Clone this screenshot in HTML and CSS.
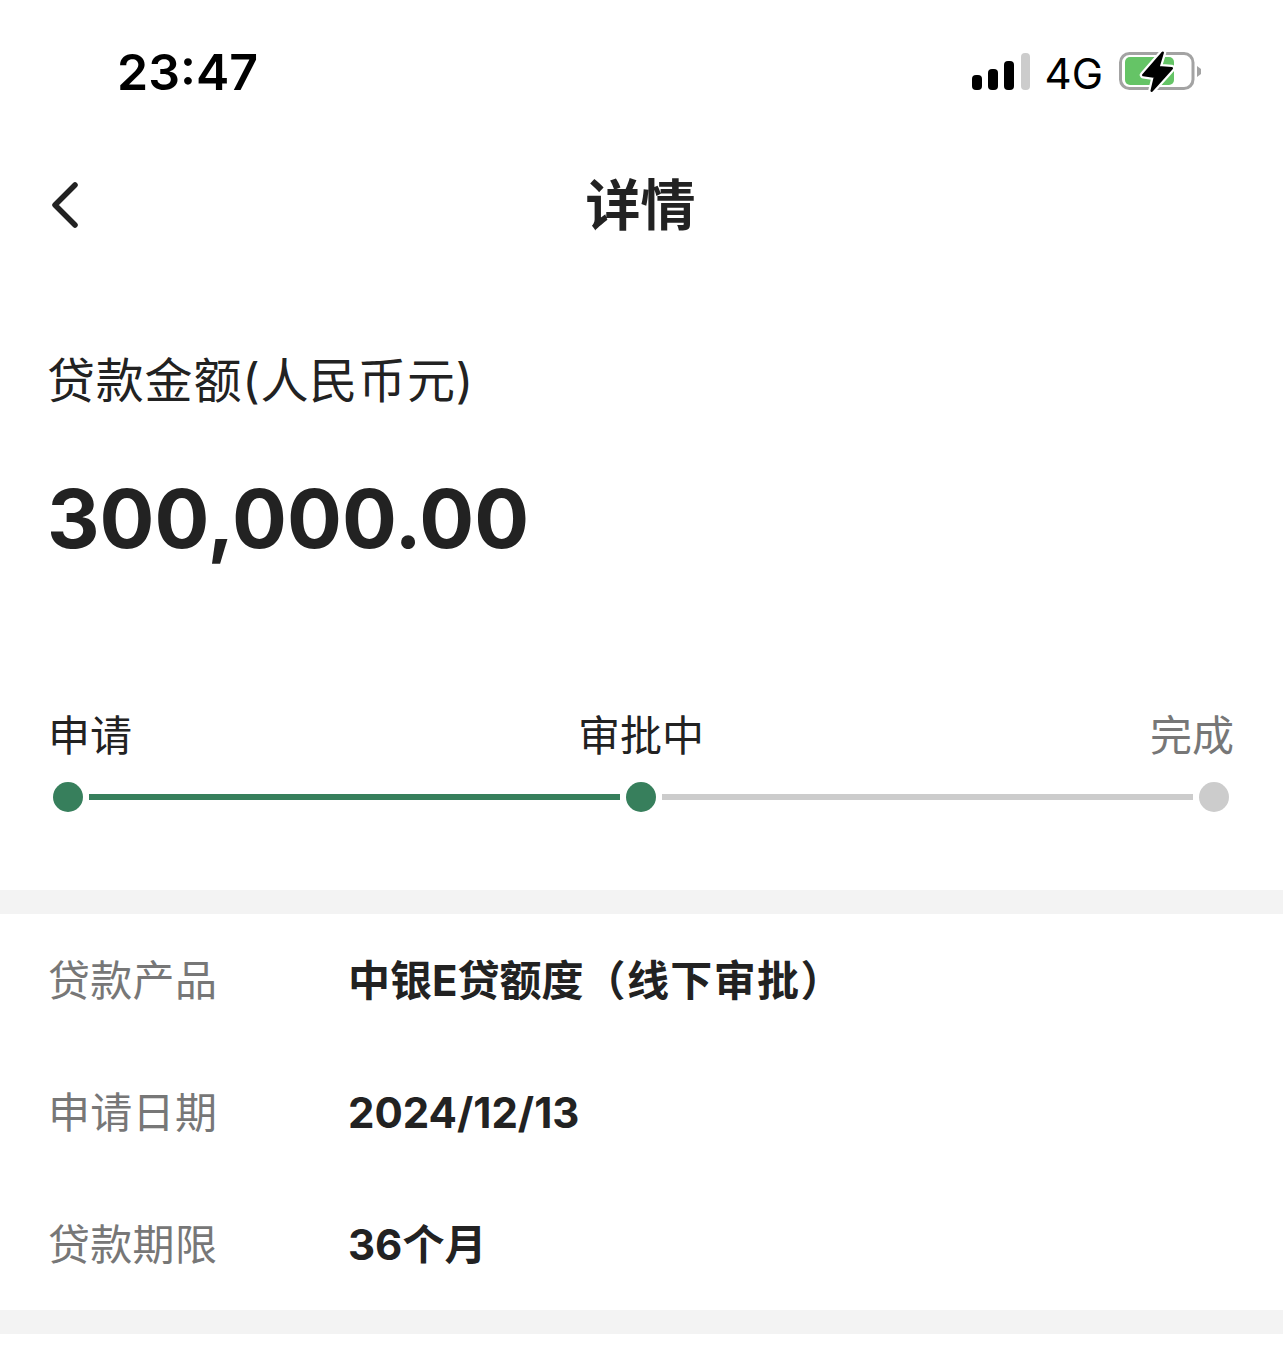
FILE: index.html
```html
<!DOCTYPE html>
<html lang="zh-CN">
<head>
    <meta charset="UTF-8">
    <meta name="viewport" content="width=device-width, initial-scale=1.0">
    <title>详情</title>
    <link rel="stylesheet" href="styles.css">
</head>
<body>
    <div class="status-bar">
        <span class="status-time">23:47</span>
        <div class="status-icons">
            <svg class="signal" width="58" height="38" viewBox="0 0 58 38">
                <rect x="0" y="23" width="10" height="15" rx="4" fill="#000"/>
                <rect x="16" y="17" width="10" height="21" rx="4" fill="#000"/>
                <rect x="32" y="9" width="10" height="29" rx="4" fill="#000"/>
                <rect x="49" y="1" width="9" height="37" rx="4" fill="#ccc"/>
            </svg>
            <span class="status-net">4G</span>
            <svg class="battery" width="84" height="42" viewBox="0 0 84 42">
                <rect x="2.5" y="3.5" width="72.5" height="35" rx="9" fill="none" stroke="#a3a3a3" stroke-width="3"/>
                <rect x="7" y="7" width="49" height="28" rx="5" fill="#65c466"/>
                <path d="M79 16 L83 19 L83 24 L79 27 Z" fill="#a3a3a3"/>
                <path d="M44.7 2.7 L25.3 25 L37 26.7 L33.7 40.7 L53.7 18.3 L40.3 17.3 Z" fill="#fff" stroke="#fff" stroke-width="7" stroke-linejoin="round"/>
                <path d="M44.7 2.7 L25.3 25 L37 26.7 L33.7 40.7 L53.7 18.3 L40.3 17.3 Z" fill="#000" stroke="#000" stroke-width="2.5" stroke-linejoin="round"/>
            </svg>
        </div>
    </div>

    <div class="nav-bar">
        <svg class="back-icon" width="28" height="46" viewBox="0 0 28 46">
            <path d="M24 3 L4 23 L24 43" fill="none" stroke="#222" stroke-width="5.5" stroke-linecap="round" stroke-linejoin="round"/>
        </svg>
        <h1 class="nav-title">详情</h1>
    </div>

    <div class="amount-section">
        <div class="amount-label">贷款金额(人民币元)</div>
        <div class="amount-value">300,000.00</div>
    </div>

    <div class="progress-section">
        <div class="progress-labels">
            <span>申请</span>
            <span>审批中</span>
            <span class="pending">完成</span>
        </div>
        <div class="progress-track">
            <span class="dot done"></span>
            <span class="line done"></span>
            <span class="dot done"></span>
            <span class="line"></span>
            <span class="dot"></span>
        </div>
    </div>

    <div class="divider"></div>

    <div class="detail-list">
        <div class="detail-row">
            <span class="detail-label">贷款产品</span>
            <span class="detail-value">中银E贷额度<span class="wide">（线下审批）</span></span>
        </div>
        <div class="detail-row">
            <span class="detail-label">申请日期</span>
            <span class="detail-value">2024/12/13</span>
        </div>
        <div class="detail-row">
            <span class="detail-label">贷款期限</span>
            <span class="detail-value">36个月</span>
        </div>
    </div>

    <div class="divider"></div>
</body>
</html>
```

FILE: styles.css
```css
* {
    margin: 0;
    padding: 0;
    box-sizing: border-box;
}

body {
    font-family: Inter, "Noto Sans CJK SC", sans-serif;
    background: #fff;
    color: #222;
    width: 1283px;
    height: 1346px;
    overflow: hidden;
}

.status-bar {
    height: 130px;
    padding: 13px 81px 0 117px;
    display: flex;
    align-items: center;
    justify-content: space-between;
}

.status-time {
    font-size: 50px;
    font-weight: 600;
    color: #000;
}

.status-icons {
    display: flex;
    align-items: center;
}

.signal {
    margin-right: 15px;
    margin-bottom: 2px;
}

.battery {
    margin-bottom: 2px;
}

.status-net {
    font-size: 42px;
    color: #000;
    margin-right: 15px;
    padding-top: 4px;
}

.nav-bar {
    height: 150px;
    padding: 0 2px 8px 0;
    position: relative;
    display: flex;
    align-items: center;
    justify-content: center;
}

.back-icon {
    position: absolute;
    left: 51px;
    top: 52px;
}

.nav-title {
    font-size: 55px;
    font-weight: 700;
}

.amount-section {
    padding: 71px 47px 0;
}

.amount-label {
    font-size: 48px;
    line-height: 60px;
    letter-spacing: 0.8px;
}

.amount-value {
    font-size: 81.5px;
    font-weight: 700;
    line-height: 100px;
    margin-top: 58px;
}

.progress-section {
    margin-top: 139px;
    padding: 0 49px 0 48px;
}

.progress-labels {
    display: flex;
    justify-content: space-between;
    font-size: 42px;
    line-height: 56px;
}

.pending {
    color: #777;
}

.progress-track {
    margin-top: 18px;
    padding: 0 5px;
    display: flex;
    align-items: center;
    gap: 6px;
}

.dot {
    flex: none;
    width: 30px;
    height: 30px;
    border-radius: 50%;
    background: #ccc;
}

.dot.done {
    background: #377f5c;
}

.line {
    flex: 1;
    height: 6px;
    background: #ccc;
}

.line.done {
    background: #377f5c;
}

.divider {
    height: 24px;
    background: #f3f3f3;
}

.progress-section + .divider {
    margin-top: 78px;
}

.detail-list {
    padding: 0 47px;
}

.detail-row {
    height: 132px;
    display: flex;
    align-items: center;
    font-size: 42px;
}

.detail-label {
    width: 300px;
    padding: 0 0 6px 1px;
    letter-spacing: 0.3px;
    color: #777;
}

.detail-value {
    font-weight: 700;
    line-height: 60px;
    padding: 2px 0 0 1px;
}

.wide {
    letter-spacing: 1.4px;
}
```
